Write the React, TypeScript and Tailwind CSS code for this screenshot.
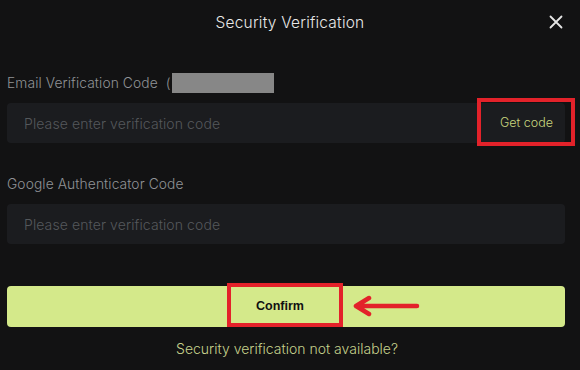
import React from "react";

export default function App() {
  return (
    <div
      className="w-[580px] h-[370px] bg-[#121213] overflow-hidden"
      style={{ fontFamily: "Inter, 'Noto Sans', sans-serif" }}
    >
      {/* Header */}
      <div className="relative h-[46px] flex items-center justify-center">
        <span className="text-[15.5px] font-light text-[#e8e8e8] tracking-[0.2px]">Security Verification</span>
        <button className="absolute right-[17px] top-[15px] w-[14px] h-[14px] flex items-center justify-center">
          <svg width="14" height="14" viewBox="0 0 14 14" fill="none">
            <path d="M1.5 1.5 L12.5 12.5 M12.5 1.5 L1.5 12.5" stroke="#e6e6e6" strokeWidth="1.8" strokeLinecap="round" />
          </svg>
        </button>
      </div>

      <div className="px-[7px] flex flex-col">
        {/* Email */}
        <div className="mt-[27px] h-[20px] flex items-center text-[13.8px] font-light text-[#909296] tracking-[0.1px]">
          <span>Email Verification Code</span>
          <span className="ml-[8px]">(</span>
          <span className="ml-[1px] w-[102px] h-[20px] bg-[#878787]" />
        </div>
        <div className="relative mt-[10px] h-[40px] w-[558px] rounded-[4px] bg-[#1b1c1f] flex items-center pl-[17px] pr-[12px]">
          <span className="flex-1 text-[14px] font-light text-[#55585c] tracking-[0.1px]">Please enter verification code</span>
          <span className="text-[12.5px] font-light text-[#c9d67e]">Get code</span>
          <div className="absolute left-[470px] top-[-5px] w-[98px] h-[48px] border-[4px] border-[#e3222a]" />
        </div>

        {/* Google */}
        <div className="mt-[31px] h-[20px] flex items-center text-[13.8px] font-light text-[#909296] tracking-[0.1px]">
          <span>Google Authenticator Code</span>
        </div>
        <div className="mt-[10px] h-[40px] w-[558px] rounded-[4px] bg-[#1b1c1f] flex items-center pl-[17px]">
          <span className="text-[14px] font-light text-[#55585c] tracking-[0.1px]">Please enter verification code</span>
        </div>

        {/* Confirm */}
        <div className="relative mt-[42px] h-[41px] w-[558px] rounded-[4px] bg-[#d4e98a] flex items-center justify-center">
          <span
            className="mr-[12px] text-[12.5px] font-bold text-[#111]"
            style={{ fontFamily: "'Liberation Sans', Arial, sans-serif" }}
          >
            Confirm
          </span>
          <div className="absolute left-[220px] top-[-3px] w-[116px] h-[44px] border-[4px] border-[#e3222a]" />
          <svg className="absolute left-[346px] top-[9px]" width="68" height="22" viewBox="0 0 68 22" fill="none">
            <path d="M3 11 H64 M3 11 L16 3 M3 11 L16 19" stroke="#e3222a" strokeWidth="4.5" strokeLinecap="round" strokeLinejoin="round" />
          </svg>
        </div>

        <div className="mt-[11px] h-[20px] flex items-center justify-center text-[14px] font-light text-[#c6d18c] pr-[6px]">
          Security verification not available?
        </div>
      </div>
    </div>
  );
}
